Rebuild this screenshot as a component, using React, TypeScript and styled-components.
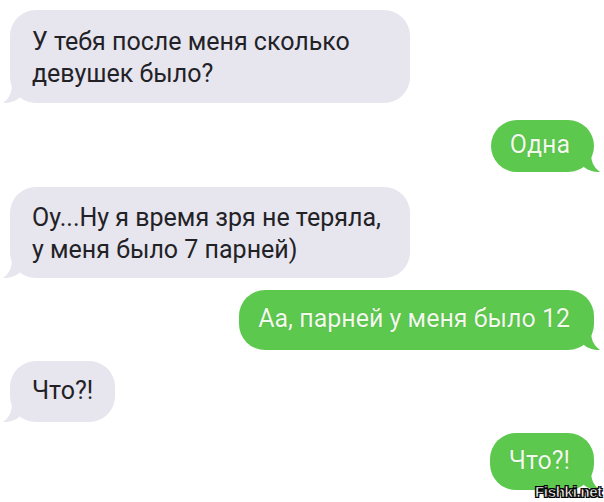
import React from "react";
import styled, { createGlobalStyle, css } from "styled-components";

const Global = createGlobalStyle`
  html, body { margin: 0; padding: 0; background: #ffffff; }
  body { font-family: "Roboto", "Liberation Sans", sans-serif; }
`;

const Page = styled.div`
  position: relative;
  width: 604px;
  height: 502px;
  box-sizing: border-box;
  padding: 10px 10px 0 10px;
  display: flex;
  flex-direction: column;
  background: #ffffff;
  overflow: hidden;
`;

const Row = styled.div<{ $out?: boolean; $gap: number }>`
  display: flex;
  justify-content: ${(p) => (p.$out ? "flex-end" : "flex-start")};
  margin-top: ${(p) => p.$gap}px;
`;

const Bubble = styled.div<{ $out?: boolean; $wide?: boolean; $pt: number; $pb: number }>`
  position: relative;
  box-sizing: border-box;
  font-size: 25px;
  line-height: 32px;
  border-radius: 26px;
  padding: ${(p) => p.$pt}px 22px ${(p) => p.$pb}px 22px;
  white-space: nowrap;
  ${(p) => (p.$wide ? "width: 400px;" : "")}
  ${(p) =>
    p.$out
      ? css`
          background: #5cc84d;
          color: #f1f9ec;
          padding-left: 19px;
          padding-right: 24px;
          text-shadow: 0 0 1px rgba(40, 90, 30, 0.35);
        `
      : css`
          background: #e7e5ee;
          color: #222226;
        `}
`;

const Tail = styled.svg<{ $out?: boolean }>`
  position: absolute;
  bottom: 0;
  width: 18px;
  height: 20px;
  ${(p) =>
    p.$out
      ? css`
          right: -6px;
          transform: scaleX(-1);
        `
      : css`
          left: -7px;
        `}
`;

const Watermark = styled.div`
  position: absolute;
  right: 2px;
  bottom: 2px;
  font-family: "Liberation Sans", "Arial", sans-serif;
  font-weight: bold;
  font-size: 15px;
  letter-spacing: -0.3px;
  color: #ffffff;
  -webkit-text-stroke: 0.6px #000;
  text-shadow: 1px 1px 0 #000, -1px -1px 0 #000, 1px -1px 0 #000, -1px 1px 0 #000;
`;

type Msg = {
  text: React.ReactNode;
  out?: boolean;
  wide?: boolean;
  pt: number;
  pb: number;
  gap: number;
};

const messages: Msg[] = [
  { text: <>У тебя после меня сколько<br />девушек было?</>, wide: true, pt: 16, pb: 13, gap: 0 },
  { text: "Одна", out: true, pt: 9, pb: 11, gap: 17 },
  { text: <>Оу...Ну я время зря не теряла,<br />у меня было 7 парней)</>, wide: true, pt: 15, pb: 12, gap: 15 },
  { text: "Аа, парней у меня было 12", out: true, pt: 13, pb: 15, gap: 12 },
  { text: "Что?!", pt: 14, pb: 15, gap: 11 },
  { text: "Что?!", out: true, pt: 12, pb: 13, gap: 11 },
];

export default function App() {
  return (
    <>
      <Global />
      <Page>
        {messages.map((m, i) => (
          <Row key={i} $out={m.out} $gap={m.gap}>
            <Bubble $out={m.out} $wide={m.wide} $pt={m.pt} $pb={m.pb}>
              {m.text}
              <Tail $out={m.out} viewBox="0 0 18 20">
                <path
                  d="M9 0 C9 9 7 15 0 20 C7 20 13 18 17 14 L17 0 Z"
                  fill={m.out ? "#5cc84d" : "#e7e5ee"}
                />
              </Tail>
            </Bubble>
          </Row>
        ))}
        <Watermark>Fishki.net</Watermark>
      </Page>
    </>
  );
}
